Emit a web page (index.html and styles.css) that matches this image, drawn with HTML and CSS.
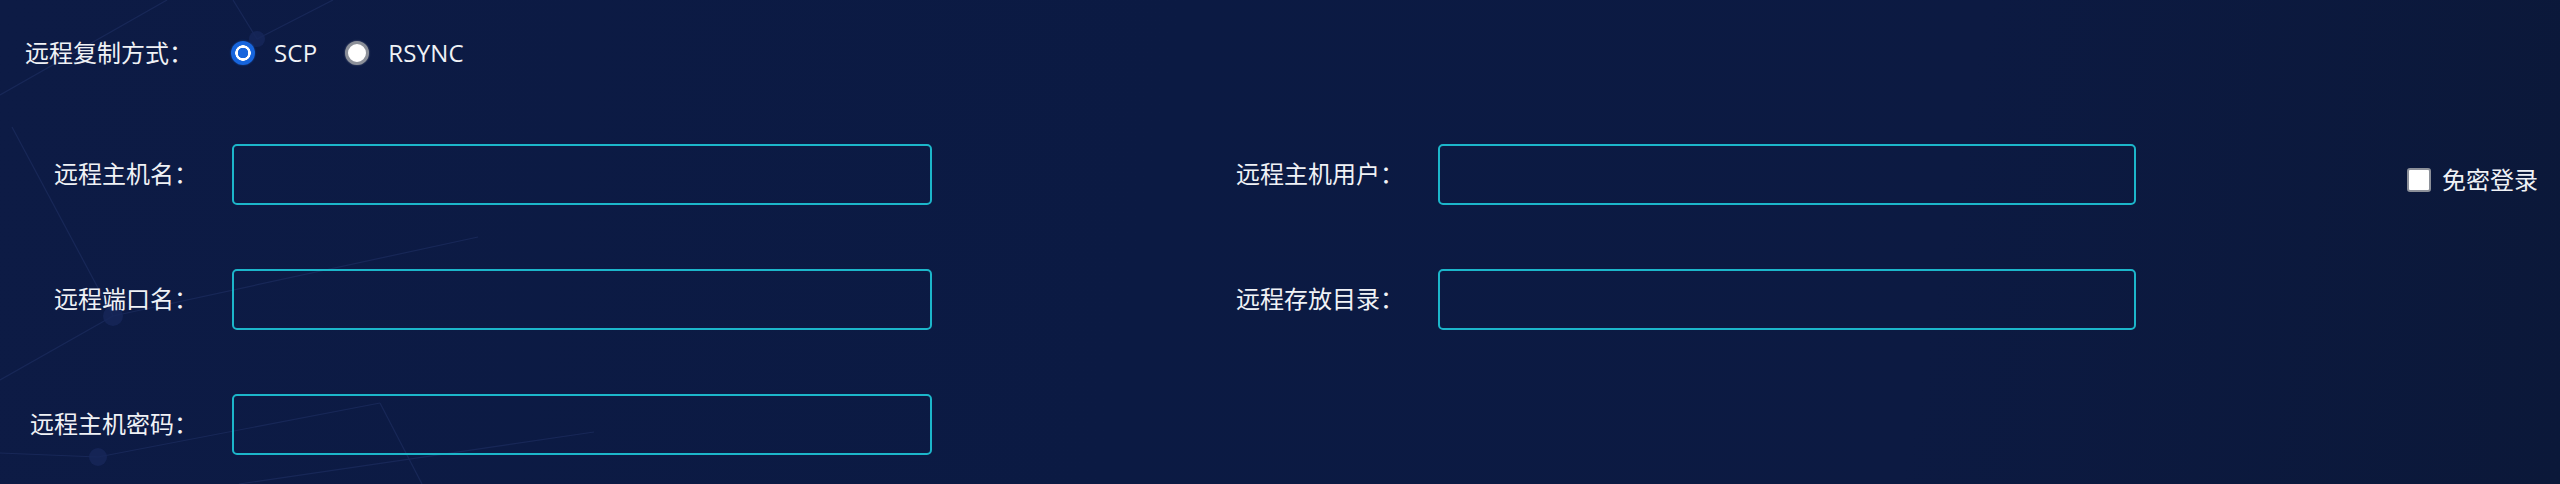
FILE: index.html
```html
<!DOCTYPE html>
<html lang="zh-CN">
<head>
<meta charset="utf-8">
<title>远程复制</title>
<link rel="stylesheet" href="styles.css">
</head>
<body>
<div class="page">
  <svg class="bg-net" width="2560" height="484" viewBox="0 0 2560 484" aria-hidden="true">
    <g stroke="#23346a" stroke-width="1.2" fill="none" opacity="0.5">
      <line x1="0" y1="95" x2="167" y2="0"/>
      <line x1="233" y1="0" x2="257" y2="39"/>
      <line x1="257" y1="39" x2="333" y2="0"/>
      <line x1="12" y1="127" x2="113" y2="316"/>
      <line x1="113" y1="316" x2="0" y2="380"/>
      <line x1="113" y1="316" x2="478" y2="237"/>
      <line x1="0" y1="453" x2="98" y2="457"/>
      <line x1="98" y1="457" x2="380" y2="403"/>
      <line x1="380" y1="403" x2="422" y2="484"/>
      <line x1="239" y1="484" x2="594" y2="432"/>
    </g>
    <g fill="#17275a" opacity="0.8">
      <circle cx="257" cy="39" r="8"/>
      <circle cx="113" cy="316" r="10"/>
      <circle cx="98" cy="457" r="9"/>
    </g>
  </svg>

  <div class="top-row">
    <span class="top-label">远程复制方式：</span>
    <label class="radio-opt">
      <input type="radio" name="mode" class="radio" checked>
      <span class="radio-text">SCP</span>
    </label>
    <label class="radio-opt">
      <input type="radio" name="mode" class="radio">
      <span class="radio-text">RSYNC</span>
    </label>
  </div>

  <div class="form-grid">
    <span class="field-label">远程主机名：</span>
    <input class="field-input" type="text">
    <span class="field-label col2">远程主机用户：</span>
    <input class="field-input narrow" type="text">
    <label class="check-opt">
      <input type="checkbox" class="check">
      <span class="check-text">免密登录</span>
    </label>

    <span class="field-label">远程端口名：</span>
    <input class="field-input" type="text">
    <span class="field-label col2">远程存放目录：</span>
    <input class="field-input narrow" type="text">
    <span class="empty"></span>

    <span class="field-label">远程主机密码：</span>
    <input class="field-input" type="password">
    <span class="empty"></span>
    <span class="empty"></span>
    <span class="empty"></span>
  </div>
</div>
</body>
</html>
```

FILE: styles.css
```css
* {
  box-sizing: border-box;
}

html, body {
  margin: 0;
  padding: 0;
}

body {
  width: 2560px;
  height: 484px;
  overflow: hidden;
  background: linear-gradient(100deg, #0d1b45 0%, #0b1a43 45%, #0c1a42 75%, #0b1839 100%);
  font-family: "Open Sans", "Noto Sans CJK SC", sans-serif;
  font-size: 24px;
  color: #f0f2f6;
}

.page {
  position: relative;
  width: 2560px;
  height: 484px;
  padding-top: 38px;
}

.bg-net {
  position: absolute;
  left: 0;
  top: 0;
  z-index: 0;
}

.top-row,
.form-grid {
  position: relative;
  z-index: 1;
}

.top-row {
  display: flex;
  align-items: center;
  height: 30px;
  padding-left: 25px;
}

.top-label {
  margin-right: 38px;
  line-height: 30px;
}

.radio-opt {
  display: flex;
  align-items: center;
  gap: 19px;
  margin-right: 28px;
}

.radio {
  appearance: none;
  -webkit-appearance: none;
  margin: 0;
  width: 24px;
  height: 24px;
  border-radius: 50%;
  background: #ffffff;
  border: 3px solid #8c9099;
  box-shadow: 0 0 2px rgba(255, 255, 255, 0.35);
}

.radio:checked {
  border: none;
  background: radial-gradient(circle, #1765dc 0 5px, #ffffff 5.5px 7.5px, #1765dc 8px);
  box-shadow: 0 0 2px rgba(30, 110, 230, 0.6);
}

.radio-text {
  line-height: 30px;
  letter-spacing: 0.2px;
}

.form-grid {
  display: grid;
  grid-template-columns: 232px 700px 506px 698px 1fr;
  grid-auto-rows: 61px;
  row-gap: 64px;
  margin-top: 76px;
  align-items: center;
}

.field-label {
  text-align: right;
  padding-right: 34px;
  margin-top: -5px;
  white-space: nowrap;
}

.field-input {
  height: 61px;
  width: 700px;
  margin: 0;
  border: 2px solid #1cb6ca;
  border-radius: 5px;
  background: transparent;
  outline: none;
  color: #f0f2f6;
  font: inherit;
  padding: 0 12px;
}

.field-input.narrow {
  width: 698px;
}

.check-opt {
  display: flex;
  align-items: center;
  gap: 11px;
  padding-left: 271px;
  margin-top: 10px;
  white-space: nowrap;
}

.check {
  appearance: none;
  -webkit-appearance: none;
  margin: 0;
  width: 24px;
  height: 24px;
  border: 2px solid #8c9099;
  border-radius: 3px;
  background: #ffffff;
}

.check-text {
  line-height: 30px;
}
```
